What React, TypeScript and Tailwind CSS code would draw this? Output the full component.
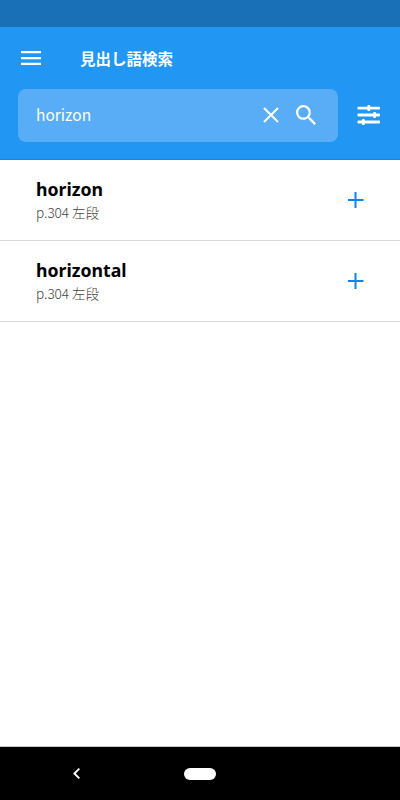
import React, { useState } from 'react';

interface Entry {
  word: string;
  location: string;
}

const entries: Entry[] = [
  { word: 'horizon', location: 'p.304 左段' },
  { word: 'horizontal', location: 'p.304 左段' },
];

const MenuIcon = () => (
  <svg width="20" height="14" viewBox="0 0 20 14" fill="currentColor">
    <path d="M0 0h20v2.3H0zM0 5.9h20v2.3H0zM0 11.7h20V14H0z" />
  </svg>
);

const ClearIcon = () => (
  <svg width="16" height="16" viewBox="0 0 16 16" fill="none" stroke="currentColor" strokeWidth="2.1">
    <path d="M1 1l14 14M15 1L1 15" />
  </svg>
);

const SearchIcon = () => (
  <svg width="20" height="20" viewBox="3 3 17.49 17.49" fill="currentColor">
    <path d="M15.5 14h-.79l-.28-.27A6.47 6.47 0 0 0 16 9.5 6.5 6.5 0 1 0 9.5 16c1.61 0 3.09-.59 4.23-1.57l.27.28v.79l5 4.99L20.49 19l-4.99-5zm-6 0C7.01 14 5 11.99 5 9.5S7.01 5 9.5 5 14 7.01 14 9.5 11.99 14 9.5 14z" />
  </svg>
);

const TuneIcon = () => (
  <svg width="24" height="20" viewBox="0 0 24 20" fill="currentColor">
    <rect x="0.5" y="1.7" width="22.5" height="2.8" rx="0.8" />
    <rect x="0.5" y="8.6" width="22.5" height="2.8" rx="0.8" />
    <rect x="0.5" y="15.6" width="22.5" height="2.8" rx="0.8" />
    <rect x="10.4" y="0" width="2.8" height="6" rx="0.8" />
    <rect x="16.2" y="7" width="2.8" height="6" rx="0.8" />
    <rect x="5" y="14" width="2.8" height="6" rx="0.8" />
  </svg>
);

const PlusIcon = () => (
  <svg width="16" height="16" viewBox="0 0 16 16" fill="currentColor">
    <path d="M0 7h15.5v2H0zM6.5 0h2v16h-2z" />
  </svg>
);

const App: React.FC = () => {
  const [query, setQuery] = useState('horizon');

  return (
    <div className="flex h-[800px] w-[400px] flex-col bg-white font-['Noto_Sans_CJK_JP',sans-serif]">
      <div className="h-[27px] bg-[#1a70b7]" />

      <header className="h-[133px] border-b border-[#1684e2] bg-[#2196f3] text-white">
        <div className="flex h-[62px] items-center pl-[21px]">
          <button aria-label="menu"><MenuIcon /></button>
          <h1 className="ml-[39px] text-[15.5px] font-bold leading-6">見出し語検索</h1>
        </div>
        <div className="flex items-center pl-[18px]">
          <div className="flex h-[53px] w-80 items-center rounded-lg bg-[#58adf6] pb-px pl-[18px] pr-[22px]">
            <input
              value={query}
              onChange={e => setQuery(e.target.value)}
              className="min-w-0 flex-1 bg-transparent pb-[2px] text-[15.5px] leading-6 outline-none"
            />
            <button aria-label="clear" onClick={() => setQuery('')}><ClearIcon /></button>
            <button aria-label="search" className="ml-[17px]"><SearchIcon /></button>
          </div>
          <button aria-label="filter" className="ml-[19px] pb-[2px]"><TuneIcon /></button>
        </div>
      </header>

      <main className="flex-1">
        {entries.map(entry => (
          <div key={entry.word} className="flex h-[81px] items-center justify-between border-b border-[#d8d8d8] pl-9 pr-9">
            <div className="pb-[2px]">
              <p className="font-['Noto_Sans',sans-serif] text-[17.7px] font-bold leading-6 text-black">{entry.word}</p>
              <p className="pt-px text-[13.5px] font-light leading-5 text-[#444]">{entry.location}</p>
            </div>
            <button aria-label="add" className="text-[#0a84f0]"><PlusIcon /></button>
          </div>
        ))}
      </main>

      <nav className="flex h-[54px] items-center border-t border-[#c8c8c8] bg-black pl-[73px] text-white">
        <svg width="7" height="11" viewBox="0 0 7 11" fill="none" stroke="currentColor" strokeWidth="1.8">
          <path d="M6.3 0.6L1.4 5.5l4.9 4.9" />
        </svg>
        <div className="ml-[104px] h-3 w-8 rounded-full bg-white" />
      </nav>
    </div>
  );
};

export default App;
